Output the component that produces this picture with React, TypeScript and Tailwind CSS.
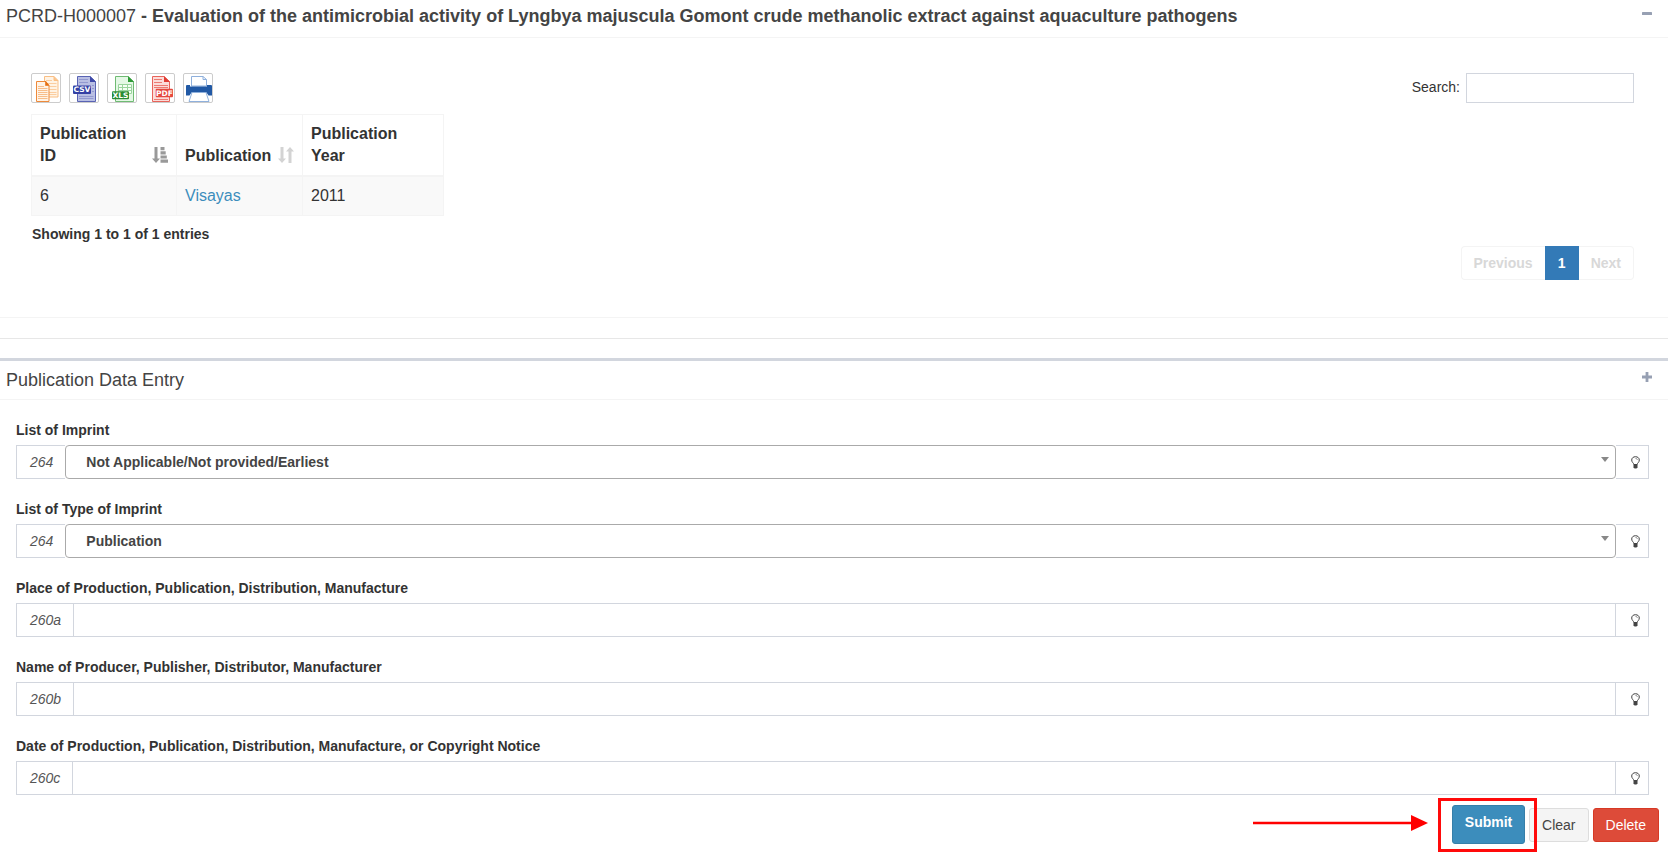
import { useState } from "react";
import type { ReactNode } from "react";

function Bulb() {
  return (
    <svg viewBox="0 0 9 13" className="h-[13px] w-[9px]" aria-hidden="true">
      <path
        d="M2.900 8.500C2.800 7.200.7 6.300.7 4 .7 2.100 2.300.7 4.500.7s3.800 1.400 3.800 3.300c0 2.300-2.100 3.200-2.200 4.500z"
        fill="#fff"
        stroke="#444"
        strokeWidth="1"
      />
      <path d="M4.500 2.400c1 0 1.800.6 1.800 1.500" fill="none" stroke="#555" strokeWidth=".7" />
      <path d="M2.500 8.200h4v3L5.500 12.600h-2L2.500 11.200z" fill="#444" />
    </svg>
  );
}

function CopyIcon() {
  return (
    <svg viewBox="0 0 28 28" className="size-7" aria-hidden="true">
      <path d="M12.500 2.500h9.500l4 4v16.500H12.500z" fill="#fff3e4" stroke="#f9bf85" />
      <path d="M22 2.500v4h4" fill="#fbc48d" stroke="#f9bf85" />
      <path d="M14 6.500h6M14 9.500h10.500M14 12.500h10.500M14 15.500h10.500M14 18.500h10.500M14 20.500h10.500" stroke="#fbcd9f" />
      <path d="M4.500 7.500h9l3.500 4v16H4.500z" fill="#fff3e6" stroke="#ee8a3a" />
      <path d="M13.500 7v4.500H17z" fill="#e56f12" stroke="#e56f12" strokeWidth=".6" />
      <path d="M6 12.500h6M6 14.500h9.500M6 16.500h9.500M6 18.500h9.500M6 20.500h9.500M6 22.500h9.500M6 24.500h9.500" stroke="#f7bd8a" />
    </svg>
  );
}

function CsvIcon() {
  return (
    <svg viewBox="0 0 28 28" className="size-7" aria-hidden="true">
      <path d="M7.500 2.500H20l5.500 5v20h-18z" fill="#b9bfe3" stroke="#5963b4" />
      <path d="M20 2v6h6z" fill="#3f4aa8" />
      <path d="M9 5.500h9M9 8.500h9M9 22.500h14.500M9 24.500h14.500M22 11.500h2M22 14.500h2M22 17.500h2" stroke="#9299d0" />
      <rect x="3" y="11.500" width="18" height="8.500" rx="1" fill="#3541a5" />
      <text x="12" y="18.400" textAnchor="middle" fill="#fff" fontSize="7.500" fontWeight="700" fontFamily="DejaVu Sans, sans-serif">CSV</text>
    </svg>
  );
}

function XlsIcon() {
  return (
    <svg viewBox="0 0 28 28" className="size-7" aria-hidden="true">
      <path d="M7.500 2.500H20l5.500 5v20h-18z" fill="#e4f8e5" stroke="#6fbb73" />
      <path d="M20 2v6h6z" fill="#2f9a37" />
      <path d="M10.500 10.500h13v9h-13zM10.500 13.500h13M10.500 16.500h13M14.500 10.500v9M19.500 10.500v9" fill="#f5fff5" stroke="#9ad49d" />
      <rect x="4" y="17.300" width="17" height="8" rx="1" fill="#2a8c32" />
      <text x="12.500" y="24" textAnchor="middle" fill="#fff" fontSize="7.500" fontWeight="700" fontFamily="DejaVu Sans, sans-serif">XLS</text>
    </svg>
  );
}

function PdfIcon() {
  return (
    <svg viewBox="0 0 28 28" className="size-7" aria-hidden="true">
      <path d="M6.500 2.500H18l5.500 5v20h-17z" fill="#fbdcd9" stroke="#e8635a" />
      <path d="M18 2v6h6z" fill="#e03e35" />
      <path d="M8 5.500h8M8 8.500h8M8 11.500h14M8 13.500h14M8 25.500h14" stroke="#ec7a72" />
      <rect x="9.700" y="14.700" width="17.300" height="8.600" rx="1" fill="#e5483e" />
      <text x="18.400" y="21.700" textAnchor="middle" fill="#fff" fontSize="7.500" fontWeight="700" fontFamily="DejaVu Sans, sans-serif">PDF</text>
    </svg>
  );
}

function PrintIcon() {
  return (
    <svg viewBox="0 0 28 28" className="size-7" aria-hidden="true">
      <path d="M7.500 12V2.500H19l3.500 3V12z" fill="#fff" stroke="#8fb0dc" />
      <path d="M19 2.500v3h3.500" fill="none" stroke="#8fb0dc" />
      <path d="M2 12q0-1 1-1h3v1.500h17V11h4q1 0 1 1v9.500h-3.500l-2-3h-15l-2 3H2z" fill="#2159a5" />
      <path d="M8 18.500h14l3 9H5z" fill="#fff" stroke="#8fb0dc" />
    </svg>
  );
}

function SortAsc() {
  return (
    <svg viewBox="0 0 16 16" className="mb-1 size-4 shrink-0" fill="#999" aria-hidden="true">
      <path d="M2.500 0h3v11.500H8L4 16 0 11.500h2.500zM8.500 0h4v3.200h-4zM8.500 4.200h5.200v3.200H8.500zM8.500 8.400h6.300v3.200H8.500zM8.500 12.600H16v3.200H8.500z" />
    </svg>
  );
}

function SortBoth() {
  return (
    <svg viewBox="0 0 16 16" className="mb-1 size-4 shrink-0" fill="#d3d3d3" aria-hidden="true">
      <path d="M2.500 0h3v11.500H8L4 16 0 11.500h2.500zM10.500 16h3V4.500H16L12 0 8 4.500h2.500z" />
    </svg>
  );
}

const exportsList = [
  { label: "Copy", icon: <CopyIcon /> },
  { label: "Export CSV", icon: <CsvIcon /> },
  { label: "Export XLS", icon: <XlsIcon /> },
  { label: "Export PDF", icon: <PdfIcon /> },
  { label: "Print", icon: <PrintIcon /> },
];

function Field({ id, label, code, joined, children }: { id: string; label: string; code: string; joined?: boolean; children: ReactNode }) {
  return (
    <div className="mb-5">
      <label htmlFor={id} className="mb-[5px] block text-sm leading-5 font-bold">
        {label}
      </label>
      <div className="flex h-[34px]">
        <span className={`flex items-center border border-[#d2d6de] pr-3 pl-[13px] text-sm text-[#555] italic ${joined ? "border-r-0" : ""}`}>
          {code}
        </span>
        {children}
        <button type="button" aria-label={`Help: ${label}`} className="flex w-[33px] items-center justify-center border border-l-0 border-[#d2d6de] pl-[6px]">
          <Bulb />
        </button>
      </div>
    </div>
  );
}

function SelectField({ id, label, code, options }: { id: string; label: string; code: string; options: string[] }) {
  return (
    <Field id={id} label={label} code={code} joined>
      <div className="relative flex-1">
        <select id={id} className="h-full w-full appearance-none rounded border border-[#aaa] bg-white px-5 text-sm font-bold text-[#444]">
          {options.map((o) => (
            <option key={o}>{o}</option>
          ))}
        </select>
        <svg viewBox="0 0 8 5" className="pointer-events-none absolute top-3 right-[7px] h-[5px] w-2" fill="#888" aria-hidden="true">
          <path d="M0 0h8L4 5z" />
        </svg>
      </div>
    </Field>
  );
}

function TextField({ id, label, code }: { id: string; label: string; code: string }) {
  return (
    <Field id={id} label={label} code={code}>
      <input id={id} type="text" className="min-w-0 flex-1 border border-l-0 border-[#d2d6de] bg-white px-3 text-sm text-[#555]" />
    </Field>
  );
}

export default function App() {
  const [query, setQuery] = useState("");
  return (
    <main className="min-h-screen bg-white font-['Liberation_Sans',Arial,sans-serif] text-sm text-[#333]">
      <section className="border-b border-[#f4f4f4]">
        <header className="flex items-start justify-between border-b border-[#f4f4f4] pt-[6px] pr-4 pb-[11px] pl-[6px] text-[#444]">
          <h1 className="text-lg leading-5">
            PCRD-H000007 <b>- Evaluation of the antimicrobial activity of Lyngbya majuscula Gomont crude methanolic extract against aquaculture pathogens</b>
          </h1>
          <button type="button" aria-label="Collapse" className="pt-[2px]">
            <svg viewBox="0 0 10 10" className="size-[10px]" fill="#97a0b3" aria-hidden="true">
              <rect y="4" width="10" height="3" rx=".6" />
            </svg>
          </button>
        </header>
        <div className="pt-[35px] pr-[34px] pb-[37px] pl-[31px]">
          <div className="flex items-center justify-between">
            <div className="flex gap-2">
              {exportsList.map((e) => (
                <button key={e.label} type="button" aria-label={e.label} className="size-[30px] rounded-xs border border-[#ccc]">
                  {e.icon}
                </button>
              ))}
            </div>
            <label className="flex items-center gap-[6px]">
              <span className="pb-[2px]">Search:</span>
              <input
                type="search"
                value={query}
                onChange={(e) => setQuery(e.target.value)}
                className="h-[30px] w-[168px] border border-[#d2d6de] px-[10px] text-xs"
              />
            </label>
          </div>
          <table className="mt-[11px] w-[413px] table-fixed border-collapse border border-[#f4f4f4] text-left text-base leading-[22px]">
            <thead>
              <tr className="border-b-2 border-[#f4f4f4] align-bottom">
                <th className="w-[145px] border-r border-[#f4f4f4] p-2">
                  <div className="flex items-end justify-between gap-2">
                    Publication ID
                    <SortAsc />
                  </div>
                </th>
                <th className="w-[126px] border-r border-[#f4f4f4] p-2">
                  <div className="flex items-end justify-between">
                    Publication
                    <SortBoth />
                  </div>
                </th>
                <th className="p-2">Publication Year</th>
              </tr>
            </thead>
            <tbody>
              <tr className="bg-[#f9f9f9]">
                <td className="border-r border-[#f4f4f4] p-2">6</td>
                <td className="border-r border-[#f4f4f4] p-2">
                  <a href="#visayas" className="text-[#3c8dbc]">Visayas</a>
                </td>
                <td className="p-2">2011</td>
              </tr>
            </tbody>
          </table>
          <p className="mt-2 pl-px leading-5 font-bold">Showing 1 to 1 of 1 entries</p>
          <nav aria-label="Pages" className="mt-[2px] flex h-[34px] justify-end font-bold">
            <button type="button" disabled className="rounded-l border border-r-0 border-[#f4f4f4] px-3 text-[#d8d8d8]">Previous</button>
            <button type="button" className="w-[34px] bg-[#337ab7] text-white">1</button>
            <button type="button" disabled className="rounded-r border border-l-0 border-[#f4f4f4] px-3 text-[#d8d8d8]">Next</button>
          </nav>
        </div>
      </section>

      <hr className="mt-5 mb-[19px] border-[#e7e7e7]" />

      <section className="border-t-[3px] border-[#d2d6de]">
        <header className="flex items-start justify-between border-b border-[#f4f4f4] pt-[10px] pr-4 pb-[10px] pl-[6px] text-[#444]">
          <h2 className="text-lg leading-[18px]">Publication Data Entry</h2>
          <button type="button" aria-label="Expand" className="pt-px">
            <svg viewBox="0 0 10 10" className="size-[10px]" fill="#97a0b3" aria-hidden="true">
              <path d="M3.600 0h2.800v3.600H10v2.800H6.400V10H3.600V6.400H0V3.600h3.600z" />
            </svg>
          </button>
        </header>
        <form className="pb-[11px]" onSubmit={(e) => e.preventDefault()}>
          <div className="pt-5 pr-[19px] pl-4">
            <SelectField id="imprint" label="List of Imprint" code="264" options={["Not Applicable/Not provided/Earliest"]} />
            <SelectField id="imprint-type" label="List of Type of Imprint" code="264" options={["Publication"]} />
            <TextField id="place" label="Place of Production, Publication, Distribution, Manufacture" code="260a" />
            <TextField id="name" label="Name of Producer, Publisher, Distributor, Manufacturer" code="260b" />
            <TextField id="date" label="Date of Production, Publication, Distribution, Manufacture, or Copyright Notice" code="260c" />
          </div>
          <div className="-mt-[10px] flex items-center justify-end gap-1 pr-[9px]">
            <div className="relative z-10">
              <button type="submit" className="h-[39px] w-[73px] rounded-[3px] border border-[#367fa9] bg-[#3c8dbc] pb-[6px] font-bold text-white">
                Submit
              </button>
              <div className="pointer-events-none absolute -top-[7px] -right-3 -bottom-2 -left-[14px] border-[3px] border-[#ff0a0a]" />
              <svg viewBox="0 0 176 18" className="pointer-events-none absolute top-[9px] right-[97px] h-[18px] w-44" fill="#ff0000" aria-hidden="true">
                <path d="M1 7.800h158V1l17 8-17 8v-6.800H1z" />
              </svg>
            </div>
            <button type="reset" className="h-[34px] rounded-[3px] border border-[#ddd] bg-[#f4f4f4] px-3 text-[#444]">Clear</button>
            <button type="button" className="h-[34px] rounded-[3px] border border-[#d73925] bg-[#dd4b39] px-3 text-white">Delete</button>
          </div>
        </form>
      </section>
    </main>
  );
}
